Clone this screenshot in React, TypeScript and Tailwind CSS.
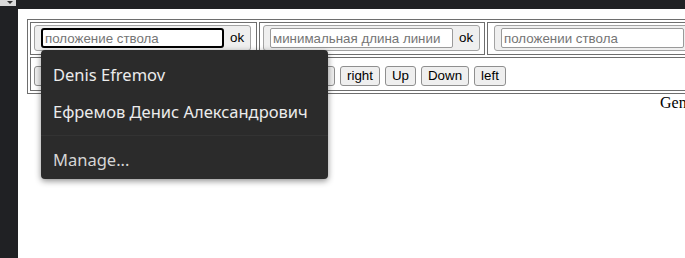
const ui = "font-['Liberation_Sans',Arial,sans-serif] text-[13.33px]";

function InputBox({ placeholder, focused }: { placeholder: string; focused?: boolean }) {
  return (
    <div className="flex items-center gap-[6px] h-[26px] pl-[6px] pr-[7px] bg-[#efefef] border border-[#a3a3a3] rounded-[3px] w-[217px] shrink-0">
      <input
        placeholder={placeholder}
        className={
          "h-[20px] w-[183px] shrink-0 bg-white px-[2px] outline-none placeholder:text-[#757575] " +
          ui +
          (focused ? " border-2 border-black rounded-[3px]" : " border border-[#9a9a9a] rounded-[2px]")
        }
      />
      <span className={ui + " text-black"}>ok</span>
    </div>
  );
}

function Btn({ label, w }: { label: string; w?: string }) {
  return (
    <button
      className={
        "h-[20px] px-[6px] bg-[#efefef] border border-[#8f8f8f] rounded-[3px] text-black leading-none " +
        ui +
        " " +
        (w ?? "")
      }
    >
      {label}
    </button>
  );
}

function AutofillMenu() {
  return (
    <div className="absolute left-[23px] top-[41px] w-[287px] h-[129px] bg-[#2b2b2b] rounded-[4px] shadow-[0_2px_6px_rgba(0,0,0,0.45)] pt-[6px] font-['Noto_Sans',sans-serif] text-[16.5px] leading-[20px]">
      <div className="h-[37px] flex items-center px-[12px] text-[#ececec]">Denis Efremov</div>
      <div className="h-[37px] flex items-center px-[12px] text-[#ececec]">Ефремов Денис Александрович</div>
      <div className="my-[5px] h-px bg-[#333333]" />
      <div className="h-[37px] flex items-center px-[12px] text-[#d6d6d6]">Manage...</div>
    </div>
  );
}

export default function App() {
  return (
    <div className="relative w-[685px] h-[258px] overflow-hidden bg-[#202124] flex flex-col">
      <div className="absolute left-0 top-0 w-[16px] h-[6px] bg-[#d9d9d9] flex justify-center">
        <div className="mt-[1px] ml-[4px] w-0 h-0 border-l-[3px] border-r-[3px] border-t-[3px] border-l-transparent border-r-transparent border-t-[#333]" />
      </div>
      <div className="h-[9px] shrink-0" />
      <div className="flex flex-1 min-h-0">
        <div className="w-[18px] shrink-0" />
        <div className="relative flex-1 bg-white pl-[9px] pt-[10px] overflow-hidden">
          <table className="w-max border-separate border-spacing-[2px] border border-[#6e6e6e]">
            <tbody>
              <tr>
                <td className="border border-[#6e6e6e] pl-[3px] pr-[5px] pt-[2px] pb-[3px]">
                  <InputBox placeholder="положение ствола" focused />
                </td>
                <td className="border border-[#6e6e6e] pl-[3px] pr-[4px] pt-[2px] pb-[3px]">
                  <InputBox placeholder="минимальная длина линии" />
                </td>
                <td className="border border-[#6e6e6e] pl-[6px] pr-[4px] pt-[2px] pb-[3px]">
                  <InputBox placeholder="положении ствола" />
                </td>
              </tr>
              <tr>
                <td colSpan={3} className="border border-[#6e6e6e] pl-[3px] pt-[8px] pb-[4px]">
                  <div className="flex gap-[5px]">
                    <Btn label="Clear" w="w-[52px]" />
                    <Btn label="Generate" w="w-[60px]" />
                    <Btn label="Save" w="w-[56px]" />
                    <Btn label="Load" w="w-[56px]" />
                    <Btn label="Undo" w="w-[57px]" />
                    <Btn label="right" />
                    <Btn label="Up" />
                    <Btn label="Down" />
                    <Btn label="left" />
                  </div>
                </td>
              </tr>
            </tbody>
          </table>
          <div className="pl-[633px] font-['Liberation_Serif',serif] text-[16px] leading-[18px] text-black whitespace-nowrap">
            Generated
          </div>
          <AutofillMenu />
        </div>
      </div>
    </div>
  );
}
